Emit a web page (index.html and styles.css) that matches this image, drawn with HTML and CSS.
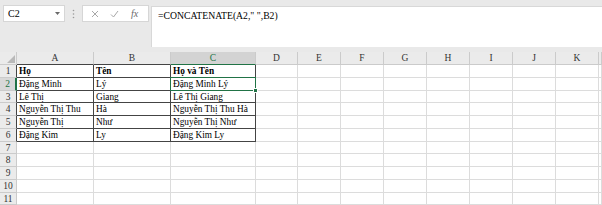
FILE: index.html
```html
<!DOCTYPE html>
<html lang="vi">
<head>
  <meta charset="UTF-8">
  <title>CONCATENATE</title>
  <link rel="stylesheet" href="styles.css">
</head>
<body>
<div class="topbar">
  <div class="namebox">
    <span>C2</span>
    <svg class="caret" width="5" height="3" viewBox="0 0 5 3"><polygon points="0,0 5,0 2.5,3" fill="#6a6a6a"/></svg>
  </div>
  <div class="grip">
    <svg width="3" height="10" viewBox="0 0 3 10"><circle cx="1.5" cy="1.5" r="0.8" fill="#9a9a9a"/><circle cx="1.5" cy="5" r="0.8" fill="#9a9a9a"/><circle cx="1.5" cy="8.5" r="0.8" fill="#9a9a9a"/></svg>
  </div>
  <div class="fbuttons">
    <svg width="8" height="8" viewBox="0 0 8 8"><path d="M1 1 L7 7 M7 1 L1 7" stroke="#a8a8a8" stroke-width="1" fill="none"/></svg>
    <svg width="9" height="8" viewBox="0 0 9 8"><path d="M1 4.5 L3.5 7 L8 1" stroke="#a8a8a8" stroke-width="1" fill="none"/></svg>
    <span class="fx">fx</span>
  </div>
  <div class="formula">=CONCATENATE(A2," ",B2)</div>
</div>

<div class="sheet">
  <div class="row head">
    <div class="corner"><svg width="8" height="8" viewBox="0 0 8 8"><polygon points="8,0 8,8 0,8" fill="#b9b9b9"/></svg></div>
    <div class="ch dk">A</div><div class="ch dk">B</div><div class="ch sel">C</div><div class="ch">D</div><div class="ch">E</div><div class="ch">F</div><div class="ch">G</div><div class="ch">H</div><div class="ch">I</div><div class="ch">J</div><div class="ch">K</div><div class="ch"></div>
  </div>
  <div class="row">
    <div class="rh dk">1</div>
    <div class="c d b">Họ</div><div class="c d b">Tên</div><div class="c d b">Họ và Tên</div>
    <div class="c"></div><div class="c"></div><div class="c"></div><div class="c"></div><div class="c"></div><div class="c"></div><div class="c"></div><div class="c"></div><div class="c"></div>
  </div>
  <div class="row">
    <div class="rh dk sel">2</div>
    <div class="c d">Đặng Minh</div><div class="c d">Lý</div><div class="c d active">Đặng Minh Lý</div>
    <div class="c"></div><div class="c"></div><div class="c"></div><div class="c"></div><div class="c"></div><div class="c"></div><div class="c"></div><div class="c"></div><div class="c"></div>
  </div>
  <div class="row">
    <div class="rh dk">3</div>
    <div class="c d">Lê Thị</div><div class="c d">Giang</div><div class="c d">Lê Thị Giang</div>
    <div class="c"></div><div class="c"></div><div class="c"></div><div class="c"></div><div class="c"></div><div class="c"></div><div class="c"></div><div class="c"></div><div class="c"></div>
  </div>
  <div class="row">
    <div class="rh dk">4</div>
    <div class="c d">Nguyễn Thị Thu</div><div class="c d">Hà</div><div class="c d">Nguyễn Thị Thu Hà</div>
    <div class="c"></div><div class="c"></div><div class="c"></div><div class="c"></div><div class="c"></div><div class="c"></div><div class="c"></div><div class="c"></div><div class="c"></div>
  </div>
  <div class="row">
    <div class="rh dk">5</div>
    <div class="c d">Nguyễn Thị</div><div class="c d">Như</div><div class="c d">Nguyễn Thị Như</div>
    <div class="c"></div><div class="c"></div><div class="c"></div><div class="c"></div><div class="c"></div><div class="c"></div><div class="c"></div><div class="c"></div><div class="c"></div>
  </div>
  <div class="row">
    <div class="rh dk">6</div>
    <div class="c d">Đặng Kim</div><div class="c d">Ly</div><div class="c d">Đặng Kim Ly</div>
    <div class="c"></div><div class="c"></div><div class="c"></div><div class="c"></div><div class="c"></div><div class="c"></div><div class="c"></div><div class="c"></div><div class="c"></div>
  </div>
  <div class="row">
    <div class="rh">7</div>
    <div class="c"></div><div class="c"></div><div class="c"></div><div class="c"></div><div class="c"></div><div class="c"></div><div class="c"></div><div class="c"></div><div class="c"></div><div class="c"></div><div class="c"></div><div class="c"></div>
  </div>
  <div class="row">
    <div class="rh">8</div>
    <div class="c"></div><div class="c"></div><div class="c"></div><div class="c"></div><div class="c"></div><div class="c"></div><div class="c"></div><div class="c"></div><div class="c"></div><div class="c"></div><div class="c"></div><div class="c"></div>
  </div>
  <div class="row">
    <div class="rh">9</div>
    <div class="c"></div><div class="c"></div><div class="c"></div><div class="c"></div><div class="c"></div><div class="c"></div><div class="c"></div><div class="c"></div><div class="c"></div><div class="c"></div><div class="c"></div><div class="c"></div>
  </div>
  <div class="row">
    <div class="rh">10</div>
    <div class="c"></div><div class="c"></div><div class="c"></div><div class="c"></div><div class="c"></div><div class="c"></div><div class="c"></div><div class="c"></div><div class="c"></div><div class="c"></div><div class="c"></div><div class="c"></div>
  </div>
  <div class="row">
    <div class="rh">11</div>
    <div class="c"></div><div class="c"></div><div class="c"></div><div class="c"></div><div class="c"></div><div class="c"></div><div class="c"></div><div class="c"></div><div class="c"></div><div class="c"></div><div class="c"></div><div class="c"></div>
  </div>
</div>
</body>
</html>
```

FILE: styles.css
```css
body {
  margin: 0;
  background-color: #e9e9e9;
  font-family: "Liberation Serif", "Times New Roman", serif;
  color: #000;
  overflow: hidden;
}
.topbar {
  display: flex;
  align-items: flex-start;
  height: 47px;
}
.namebox {
  display: flex;
  align-items: center;
  justify-content: space-between;
  box-sizing: border-box;
  margin: 5px 0 0 3px;
  width: 62px;
  height: 17px;
  padding: 0 4px 0 4px;
  background-color: white;
  border: 1px solid #d6d6d6;
  font-size: 10px;
}
.grip {
  display: flex;
  justify-content: center;
  width: 17px;
  margin-top: 9px;
}
.fbuttons {
  display: flex;
  align-items: center;
  justify-content: space-around;
  box-sizing: border-box;
  margin-top: 5px;
  width: 67px;
  height: 17px;
  padding: 0 4px 0 2px;
  background-color: white;
  border: 1px solid #d6d6d6;
}
.fx {
  font-style: italic;
  font-size: 10px;
  color: #6a6a6a;
}
.formula {
  flex: 1;
  box-sizing: border-box;
  margin: 6px 0 0 2px;
  height: 41px;
  padding: 3px 0 0 6px;
  background-color: white;
  border-top: 1px solid #d8d8d8;
  border-left: 1px solid #d8d8d8;
  font-size: 9.7px;
}
.sheet {
  display: grid;
  grid-template-rows: 13px 13px 13px 12px 13px 13px 13px 12px 13px 13px 13px 12px;
  margin-top: 5px;
}
.row {
  display: grid;
  grid-template-columns: 17px 77px 77px 85px 42px repeat(7, 43px) 1fr;
  grid-template-rows: minmax(0, 1fr);
  min-height: 0;
}
.row > div {
  box-sizing: border-box;
  border-right: 1px solid #dcdcdc;
  border-bottom: 1px solid #dcdcdc;
  white-space: nowrap;
  line-height: 12.5px;
}
.corner {
  display: flex;
  align-items: flex-end;
  justify-content: flex-end;
  padding: 0 1px 1px 0;
  background-color: #ebebeb;
}
.row > .corner,
.row > .ch,
.row > .rh {
  border-color: #cbcbcb;
}
.ch {
  background-color: #ebebeb;
  text-align: center;
  font-size: 9.5px;
  color: #333;
}
.rh {
  background-color: #ebebeb;
  text-align: center;
  font-size: 9.5px;
  color: #333;
}
.row > .ch.dk {
  border-bottom-color: #444;
}
.row > .rh.dk {
  border-right-color: #444;
}
.row > .ch.sel {
  background-color: #d3d3d3;
  color: #217346;
  border-bottom: 1px solid #217346;
}
.row > .rh.sel {
  background-color: #d8d8d8;
  color: #217346;
  border-right: 2px solid #217346;
}
.c {
  background-color: white;
  padding-left: 2px;
  font-size: 9.3px;
}
.row > .c.d {
  border-right-color: #444;
  border-bottom-color: #444;
}
.b {
  font-weight: bold;
}
.active {
  position: relative;
}
.active::after {
  content: "";
  position: absolute;
  left: -1px;
  top: -1px;
  right: -1px;
  bottom: -1px;
  border: 1.5px solid #217346;
}
.active::before {
  content: "";
  position: absolute;
  right: -3px;
  bottom: -3px;
  width: 3px;
  height: 3px;
  background-color: #217346;
  border: 1px solid white;
  z-index: 2;
}
```
